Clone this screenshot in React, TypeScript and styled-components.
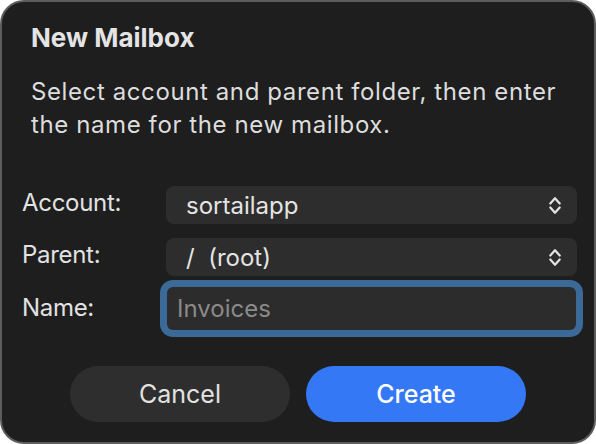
import React from "react";
import styled, { createGlobalStyle } from "styled-components";

const GlobalStyle = createGlobalStyle`
  html, body {
    margin: 0;
    padding: 0;
    background: #ffffff;
  }
  body {
    font-family: "Inter", "Noto Sans", "Liberation Sans", sans-serif;
    -webkit-font-smoothing: antialiased;
  }
  * {
    box-sizing: border-box;
  }
`

const Dialog = styled.div`
  width: 596px;
  height: 444px;
  border: 2px solid #5d5d5d;
  border-radius: 24px;
  background: #1e1e1e;
  color: #e2e2e2;
  display: flex;
  flex-direction: column;
  overflow: hidden;
`

const Header = styled.div`
  padding: 21px 20px 0 29px;
`

const Title = styled.h1`
  margin: 0;
  font-size: 26px;
  font-weight: 700;
  line-height: 30px;
  color: #e4e4e4;
`

const Message = styled.p`
  margin: 22px 0 0;
  font-size: 24px;
  font-weight: 400;
  letter-spacing: 0.6px;
  line-height: 33px;
  color: #dddddd;
`

const Form = styled.div`
  margin-top: 45px;
  padding: 0 17px 0 20px;
  display: grid;
  grid-template-columns: 144px 1fr;
  row-gap: 14px;
  align-items: center;
`

const Label = styled.label`
  font-size: 24px;
  line-height: 29px;
  letter-spacing: -0.3px;
  color: #e2e2e2;
  padding-bottom: 6px;
`

const Popup = styled.div`
  height: 38px;
  border-radius: 8px;
  background: #2d2d2d;
  display: flex;
  align-items: center;
  justify-content: space-between;
  padding: 0 16px 0 20px;
  font-size: 24px;
  line-height: 29px;
  color: #e4e4e4;
`

const FieldWrap = styled.div<{ $gapTop: number }>`
  margin-top: ${(p) => p.$gapTop}px;
  padding: 0 1px 0 1px;
`

const Field = styled.input`
  display: block;
  width: 100%;
  height: 43px;
  border: none;
  outline: none;
  border-radius: 6px;
  background: #2c2c2c;
  box-shadow: 0 0 0 7px #3c6a98;
  padding: 0 10px;
  font-family: inherit;
  font-size: 24px;
  color: #e4e4e4;
  &::placeholder {
    color: #8a8a8a;
  }
`

const Buttons = styled.div`
  margin-top: auto;
  margin-bottom: 20px;
  display: flex;
  justify-content: center;
  gap: 16px;
`

const Button = styled.button<{ $primary?: boolean }>`
  width: 220px;
  height: 56px;
  border: none;
  border-radius: 28px;
  background: ${(p) => (p.$primary ? "#3478f6" : "#2e2e2e")};
  color: ${(p) => (p.$primary ? "#ffffff" : "#e2e2e2")};
  font-family: inherit;
  font-size: 25px;
  font-weight: ${(p) => (p.$primary ? 500 : 400)};
  cursor: pointer;
`

function Chevrons() {
  return (
    <svg width="12" height="19" viewBox="0 0 12 19" fill="none">
      <path
        d="M1.3 7.5 L6 2.2 L10.7 7.5"
        stroke="#e4e4e4"
        strokeWidth="2.2"
        strokeLinecap="round"
        strokeLinejoin="round"
      />
      <path
        d="M1.3 11.5 L6 16.8 L10.7 11.5"
        stroke="#e4e4e4"
        strokeWidth="2.2"
        strokeLinecap="round"
        strokeLinejoin="round"
      />
    </svg>
  );
}

export default function App() {
  return (
    <>
      <GlobalStyle />
      <Dialog>
        <Header>
          <Title>New Mailbox</Title>
          <Message>
            Select account and parent folder, then enter
            <br />
            the name for the new mailbox.
          </Message>
        </Header>
        <Form>
          <Label>Account:</Label>
          <Popup>
            <span>sortailapp</span>
            <Chevrons />
          </Popup>
          <Label>Parent:</Label>
          <Popup>
            <span>/&nbsp; (root)</span>
            <Chevrons />
          </Popup>
          <Label>Name:</Label>
          <FieldWrap $gapTop={-3}>
            <Field placeholder="Invoices" />
          </FieldWrap>
        </Form>
        <Buttons>
          <Button>Cancel</Button>
          <Button $primary>Create</Button>
        </Buttons>
      </Dialog>
    </>
  );
}
